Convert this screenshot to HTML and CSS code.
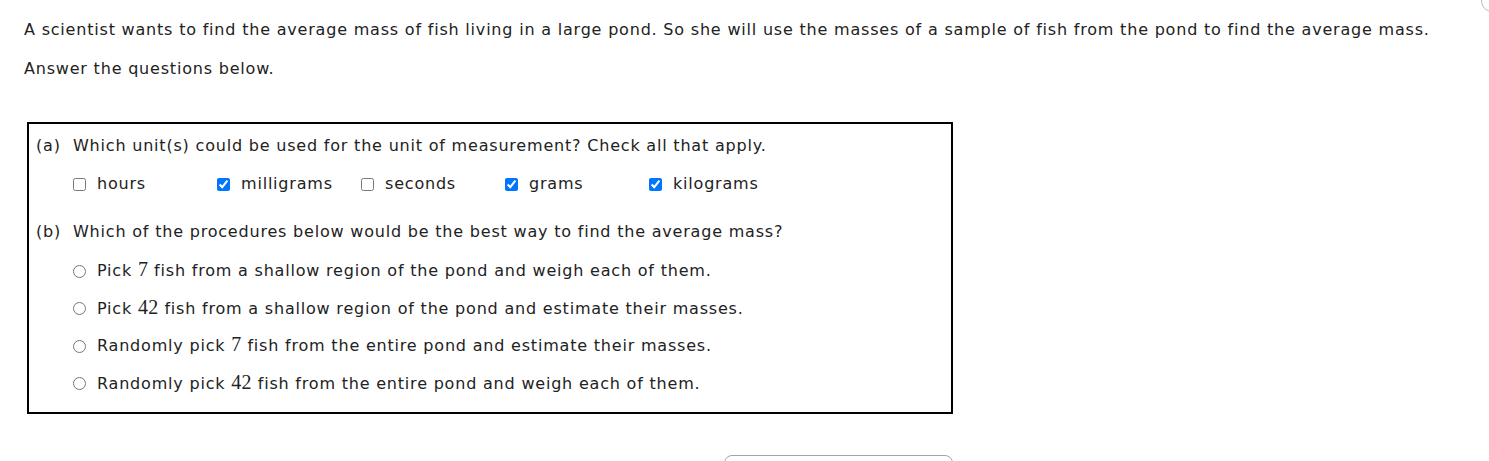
FILE: index.html
```html
<!DOCTYPE html>
<html>
<head>
<meta charset="utf-8">
<link rel="stylesheet" href="styles.css">
</head>
<body>
<div class="page">
  <p class="intro">A scientist wants to find the average mass of fish living in a large pond. So she will use the masses of a sample of fish from the pond to find the average mass.</p>
  <p class="intro second">Answer the questions below.</p>
  <div class="box">
    <div class="q"><span class="lbl">(a)</span><span>Which unit(s) could be used for the unit of measurement? Check all that apply.</span></div>
    <div class="checks">
      <label class="chk"><input type="checkbox"><span>hours</span></label>
      <label class="chk"><input type="checkbox" checked><span>milligrams</span></label>
      <label class="chk"><input type="checkbox"><span>seconds</span></label>
      <label class="chk"><input type="checkbox" checked><span>grams</span></label>
      <label class="chk"><input type="checkbox" checked><span>kilograms</span></label>
    </div>
    <div class="q qb"><span class="lbl">(b)</span><span>Which of the procedures below would be the best way to find the average mass?</span></div>
    <div class="radios">
      <label class="rad"><input type="radio" name="p"><span>Pick <span class="num">7</span> fish from a shallow region of the pond and weigh each of them.</span></label>
      <label class="rad"><input type="radio" name="p"><span>Pick <span class="num">42</span> fish from a shallow region of the pond and estimate their masses.</span></label>
      <label class="rad"><input type="radio" name="p"><span>Randomly pick <span class="num">7</span> fish from the entire pond and estimate their masses.</span></label>
      <label class="rad"><input type="radio" name="p"><span>Randomly pick <span class="num">42</span> fish from the entire pond and weigh each of them.</span></label>
    </div>
  </div>
  <div class="footer"><div class="btn"></div></div>
</div>
<div class="corner"></div>
</body>
</html>
```
FILE: styles.css
```css
html, body {
  margin: 0;
  padding: 0;
  background: #fff;
}
body {
  font-family: "DejaVu Sans", Verdana, sans-serif;
  font-size: 16px;
  letter-spacing: 0.8px;
  color: #222;
  width: 1489px;
  height: 461px;
  overflow: hidden;
  position: relative;
}
.page {
  padding: 19px 0 0 24px;
}
.intro {
  margin: 0;
  line-height: 22px;
  white-space: nowrap;
}
.second {
  margin-top: 17px;
}
.box {
  margin-top: 42px;
  margin-left: 3px;
  width: 915px;
  border: 2px solid #000;
  padding: 11px 0 17px 7px;
}
.q {
  display: flex;
  line-height: 22px;
}
.lbl {
  width: 37px;
  flex: none;
}
.qb {
  margin-top: 26px;
}
.checks {
  display: flex;
  margin-top: 16px;
  padding-left: 37px;
}
.chk {
  width: 144px;
  display: flex;
  align-items: center;
  line-height: 22px;
}
input {
  margin: 0 11px 0 0;
  width: 13px;
  height: 13px;
  flex: none;
}
.radios {
  display: flex;
  flex-direction: column;
  gap: 15.5px;
  margin-top: 17px;
  padding-left: 37px;
}
.rad {
  display: flex;
  align-items: center;
  line-height: 22px;
  height: 22px;
}
.num {
  font-family: "Liberation Serif", "Times New Roman", serif;
  font-size: 20px;
  line-height: 16px;
  letter-spacing: 0.3px;
}
.footer {
  padding-left: 700px;
  margin-top: 41px;
  height: 6px;
  overflow: hidden;
}
.btn {
  width: 227px;
  height: 30px;
  border: 1px solid #a0a4a8;
  border-radius: 8px;
}
.corner {
  position: absolute;
  right: -14px;
  top: -10px;
  width: 20px;
  height: 20px;
  border: 1px solid #b8bcc0;
  border-radius: 50%;
}
```
